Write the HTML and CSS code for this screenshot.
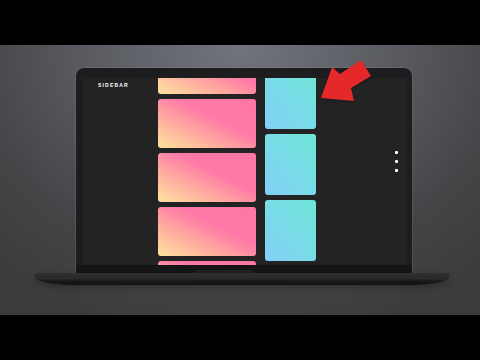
FILE: index.html
```html
<!DOCTYPE html>
<html>
<head>
<meta charset="utf-8">
<link rel="stylesheet" href="styles.css">
</head>
<body>
<div class="frame">
  <div class="laptop">
    <div class="bezel">
      <div class="screen">
        <div class="sidebar">SIDEBAR</div>
        <div class="col col-wide">
          <div class="card warm"></div>
          <div class="card warm"></div>
          <div class="card warm"></div>
          <div class="card warm"></div>
          <div class="card warm"></div>
        </div>
        <div class="col col-narrow">
          <div class="card cool tall"></div>
          <div class="card cool tall"></div>
          <div class="card cool tall"></div>
        </div>
        <div class="dots">
          <span class="dot"></span>
          <span class="dot"></span>
          <span class="dot"></span>
        </div>
      </div>
      <div class="chin"><span class="notch"></span></div>
    </div>
    <div class="base"></div>
  </div>
  <svg class="arrow" width="60" height="50" viewBox="0 0 60 50">
    <polygon points="1,40 12,9 20,16 41,2 51,18 31,30 34,43" fill="#e5292b"/>
  </svg>
</div>
</body>
</html>
```

FILE: styles.css
```css
html, body {
  margin: 0;
  padding: 0;
}
body {
  width: 480px;
  height: 360px;
  background: #000;
  overflow: hidden;
  font-family: "Liberation Sans", Arial, sans-serif;
}
.frame {
  position: relative;
  margin-top: 45px;
  height: 270px;
  background: radial-gradient(ellipse 75% 110% at 50% 0%, #71747b 0%, #5b5d63 40%, #454548 75%, #3c3c3f 100%);
  overflow: hidden;
}
.laptop {
  padding-top: 23px;
}
.bezel {
  margin-left: 76px;
  width: 336px;
  height: 205px;
  box-sizing: border-box;
  padding: 10px 5px 0 7px;
  background: #1d1d1f;
  border-radius: 8px 8px 0 0;
  box-shadow: 0 0 0 1px rgba(255,255,255,0.07);
  display: flex;
  flex-direction: column;
}
.screen {
  height: 187px;
  background: #232323;
  overflow: hidden;
  display: flex;
}
.sidebar {
  width: 75px;
  box-sizing: border-box;
  padding: 5px 0 0 15px;
  color: #fff;
  font-size: 5px;
  font-weight: 700;
  letter-spacing: 1.2px;
  line-height: 5px;
}
.col {
  display: flex;
  flex-direction: column;
  gap: 5px;
}
.col-wide {
  width: 98px;
  margin-top: -33px;
}
.col-narrow {
  width: 51px;
  margin-left: 9px;
  margin-top: -10px;
}
.card {
  flex: none;
  height: 49px;
  border-radius: 3px;
}
.card.tall {
  height: 61px;
}
.warm {
  background: linear-gradient(to top right, #ffe3a0 0%, #ffa8a0 35%, #ff7aa8 60%, #ff76a6 100%);
}
.cool {
  background: linear-gradient(to top right, #82cff6 0%, #78dde6 55%, #6fe6d6 100%);
}
.dots {
  margin-left: auto;
  margin-right: 9px;
  padding-top: 73px;
  display: flex;
  flex-direction: column;
  gap: 6px;
}
.dot {
  width: 3px;
  height: 3px;
  background: #fff;
  border-radius: 1px;
}
.chin {
  flex: 1;
  margin: 0 -5px 0 -7px;
  background: #151517;
  display: flex;
  justify-content: center;
}
.notch {
  width: 56px;
  height: 3px;
  margin-top: 5px;
  margin-left: -40px;
  background: #1f1f21;
}
.base {
  margin-left: 35px;
  width: 414px;
  height: 12px;
  background: linear-gradient(#2f2f32 0%, #29292c 45%, #18181a 70%, #111113 100%);
  border-radius: 1px 1px 40px 40px / 1px 1px 8px 8px;
  box-shadow: 0 3px 6px rgba(0,0,0,0.25);
}
.arrow {
  position: absolute;
  left: 320px;
  top: 13px;
  filter: drop-shadow(0 1px 1px rgba(0,0,0,0.35));
}
```
